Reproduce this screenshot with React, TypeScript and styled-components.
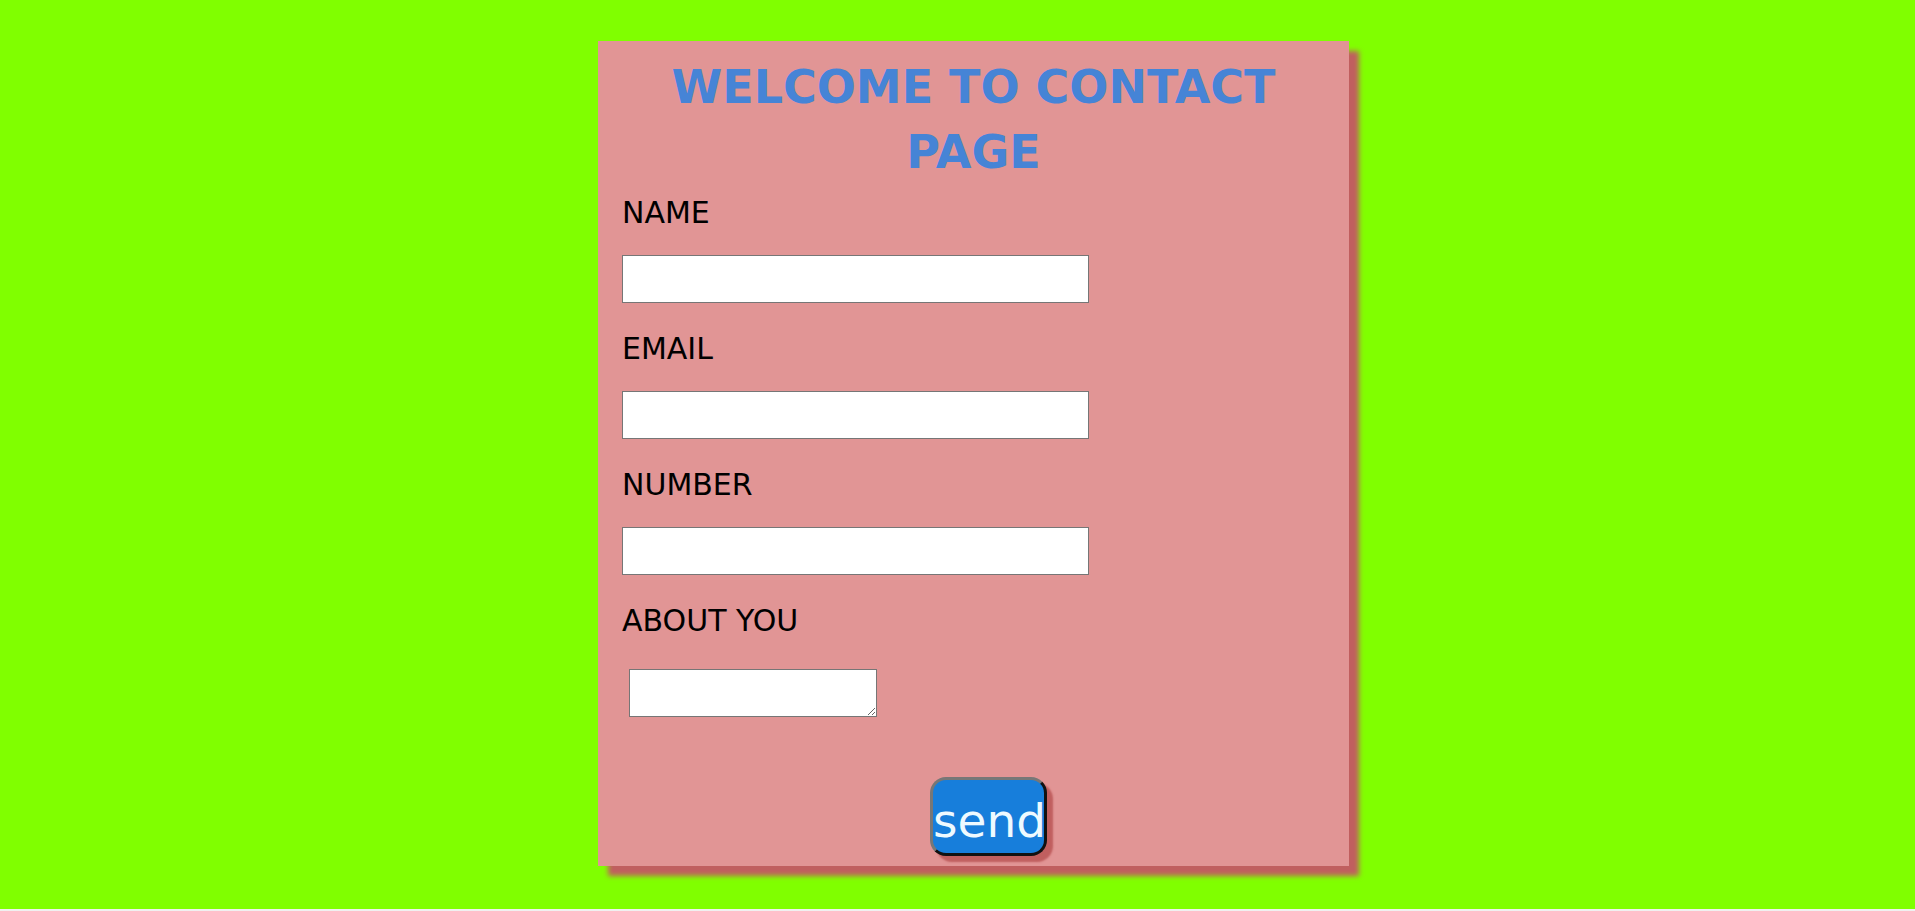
import React from "react";
import styled, { createGlobalStyle } from "styled-components";

const Global = createGlobalStyle`
  html, body { margin: 0; padding: 0; background: #f0f0f0; }
  body { font-family: "Comic Sans MS", "DejaVu Sans", sans-serif; }
`;

const Page = styled.div`
  background: #80ff00;
  height: 909px;
  padding-top: 41px;
  box-sizing: border-box;
  overflow: hidden;
`;

const Card = styled.form`
  width: 751px;
  height: 825px;
  margin-left: 598px;
  box-sizing: border-box;
  background: #e19595;
  box-shadow: 10px 10px 5px #c05f5f;
  padding: 14px 24px 0 24px;
  display: flex;
  flex-direction: column;
  align-items: flex-start;
`;

const Title = styled.h1`
  align-self: center;
  margin: 0;
  max-width: 620px;
  text-align: center;
  color: #4684d6;
  font-size: 46px;
  line-height: 65px;
  font-weight: bold;
  font-family: "Comic Sans MS", "DejaVu Sans", sans-serif;
`;

const Label = styled.label<{ $top: number }>`
  display: block;
  margin-top: ${(p) => p.$top}px;
  font-size: 30px;
  line-height: 34px;
  color: #000;
`;

const Input = styled.input`
  display: block;
  margin-top: 25px;
  width: 467px;
  height: 48px;
  box-sizing: border-box;
  border: 1px solid #767676;
  background: #fff;
  padding: 0 4px;
  font-size: 16px;
`;

const TextArea = styled.textarea`
  display: block;
  margin: 31px 0 0 7px;
  width: 248px;
  height: 48px;
  box-sizing: border-box;
  border: 1px solid #767676;
  background: #fff;
`;

const SendButton = styled.button`
  margin: 60px 0 0 308px;
  width: 117px;
  height: 79px;
  box-sizing: border-box;
  padding: 8px 0 0 0;
  border: 3px solid;
  border-color: #777 #111 #111 #777;
  border-radius: 16px;
  background: #177edb;
  color: #eefaff;
  font-family: "Comic Sans MS", "DejaVu Sans", sans-serif;
  font-size: 47px;
  line-height: 1;
  box-shadow: 6px 6px 2px #c05f5f;
  cursor: pointer;
`;

export default function App() {
  return (
    <>
      <Global />
      <Page>
        <Card onSubmit={(e) => e.preventDefault()}>
          <Title>WELCOME TO CONTACT PAGE</Title>
          <Label $top={11} htmlFor="name">NAME</Label>
          <Input id="name" type="text" />
          <Label $top={29} htmlFor="email">EMAIL</Label>
          <Input id="email" type="email" />
          <Label $top={29} htmlFor="number">NUMBER</Label>
          <Input id="number" type="text" />
          <Label $top={29} htmlFor="about">ABOUT YOU</Label>
          <TextArea id="about" />
          <SendButton type="submit">send</SendButton>
        </Card>
      </Page>
    </>
  );
}
